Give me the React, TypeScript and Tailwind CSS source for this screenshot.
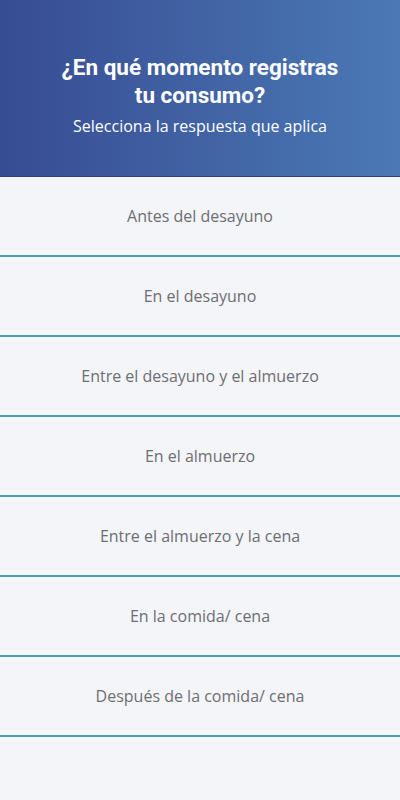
const options = [
  "Antes del desayuno",
  "En el desayuno",
  "Entre el desayuno y el almuerzo",
  "En el almuerzo",
  "Entre el almuerzo y la cena",
  "En la comida/ cena",
  "Después de la comida/ cena",
];

export default function App() {
  return (
    <div className="min-h-[800px] w-full bg-[#f4f5f9]">
      {/* Header */}
      <div className="h-[177px] border-b border-[#2b4286] bg-gradient-to-r from-[#374c93] to-[#4b79b5] px-4 pt-[53px] text-center text-white">
        <h1 className="font-['Roboto',sans-serif] text-[22.5px] leading-[28px] font-bold">
          ¿En qué momento registras
          <br />
          tu consumo?
        </h1>
        <p className="mt-[6px] font-['Open_Sans',sans-serif] text-[16px] leading-[22px]">
          Selecciona la respuesta que aplica
        </p>
      </div>

      {/* Options */}
      <div>
        {options.map((o) => (
          <button
            key={o}
            className="flex h-[80px] w-full items-center justify-center border-b-2 border-[#4aa0a3] font-['Open_Sans',sans-serif] text-[16px] text-[#6e6e72]"
          >
            {o}
          </button>
        ))}
      </div>
    </div>
  );
}
